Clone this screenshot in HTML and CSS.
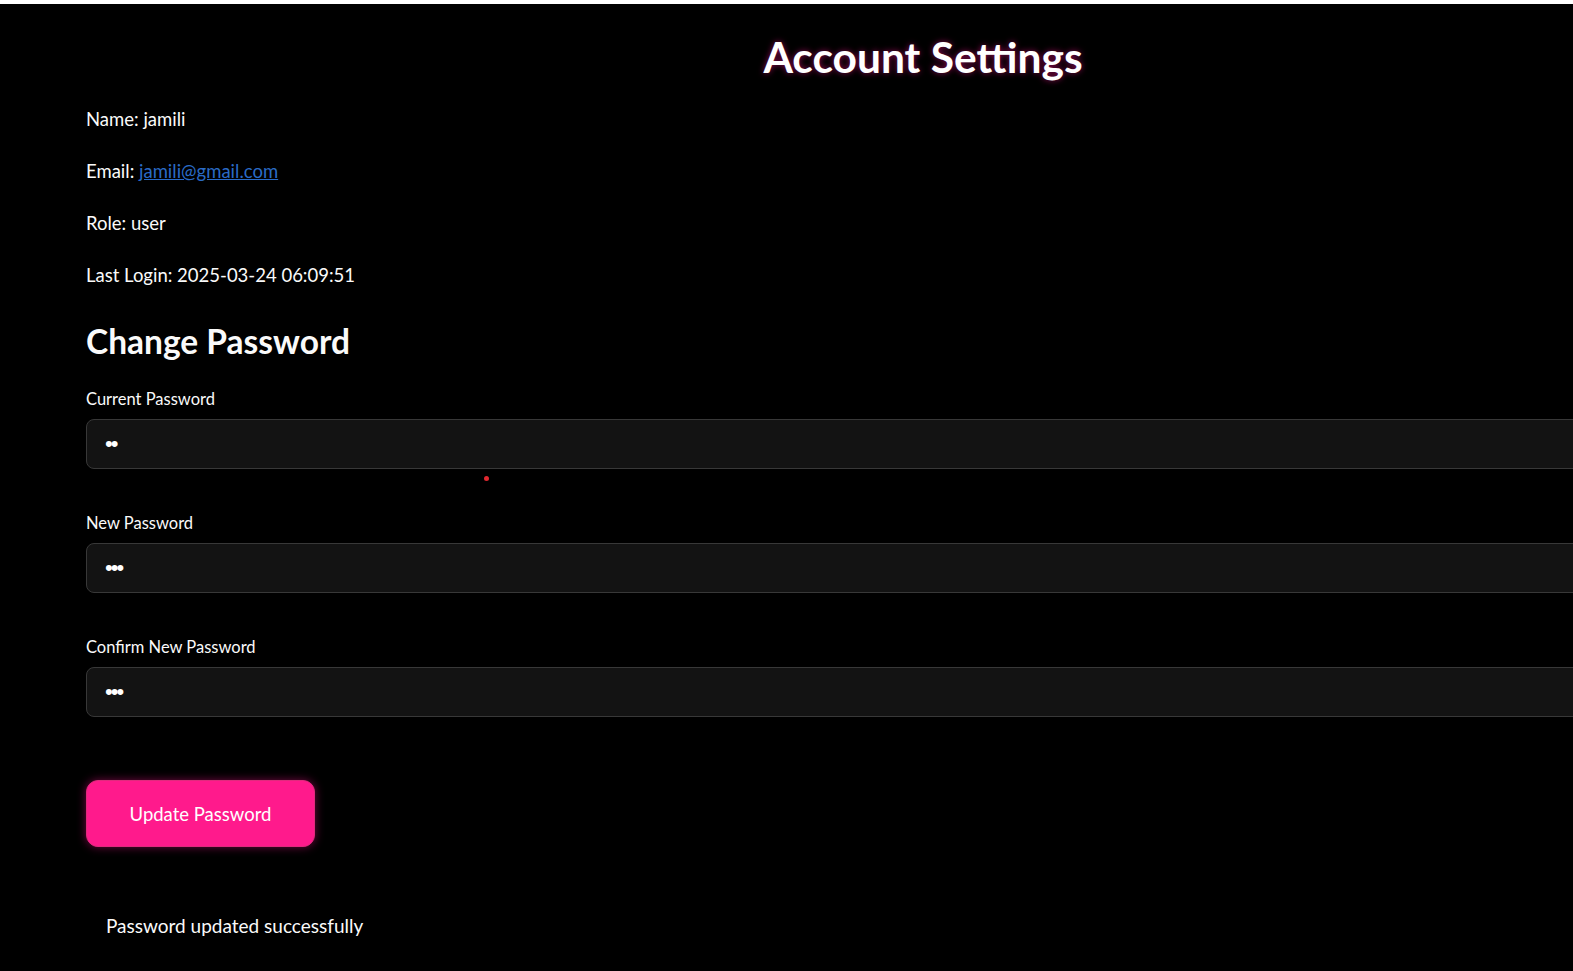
FILE: index.html
```html
<!DOCTYPE html>
<html>
<head>
<meta charset="utf-8">
<link rel="stylesheet" href="styles.css">
</head>
<body>
<div class="topbar"></div>
<main class="page">
  <h1 class="title">Account Settings</h1>
  <p class="info">Name: jamili</p>
  <p class="info">Email: <a href="#" class="link">jamili@gmail.com</a></p>
  <p class="info">Role: user</p>
  <p class="info">Last Login: 2025-03-24 06:09:51</p>
  <h2 class="subtitle">Change Password</h2>
  <div class="field">
    <label class="label">Current Password</label>
    <input class="input" type="password" value="12">
    <span class="dot"></span>
  </div>
  <div class="field">
    <label class="label">New Password</label>
    <input class="input" type="password" value="123">
  </div>
  <div class="field">
    <label class="label">Confirm New Password</label>
    <input class="input" type="password" value="123">
  </div>
  <button class="btn">Update Password</button>
  <div class="alert">Password updated successfully</div>
</main>
</body>
</html>
```
FILE: styles.css
```css
html, body {
  margin: 0;
  padding: 0;
  background: #000;
  overflow: hidden;
}
body {
  font-family: "Lato", "Noto Sans", sans-serif;
  color: #fafafa;
  width: 1573px;
  height: 971px;
}
.topbar {
  height: 4px;
  background: #fff;
}
.page {
  width: 1674px;
  padding-left: 86px;
  box-sizing: content-box;
}
.title {
  margin: 0;
  padding-top: 30px;
  height: 67px;
  text-align: center;
  font-size: 42.5px;
  font-weight: 700;
  line-height: 46px;
  color: #fff;
  text-shadow: 0 0 6px rgba(255, 20, 147, 0.55);
}
.info {
  margin: 0;
  font-size: 18.5px;
  line-height: 26px;
  height: 52px;
  box-sizing: border-box;
  padding-top: 5px;
}
.link {
  color: #2a6bc6;
  text-decoration: underline;
}
.subtitle {
  margin: 0;
  padding-top: 10px;
  font-size: 33.5px;
  font-weight: 700;
  line-height: 44px;
  height: 70px;
}
.field {
  position: relative;
  display: flex;
  flex-direction: column;
  height: 124px;
}
.label {
  font-size: 16.5px;
  line-height: 20px;
  height: 30px;
}
.input {
  height: 50px;
  box-sizing: border-box;
  background: #131313;
  border: 1px solid #383838;
  border-radius: 8px;
  padding: 0 18px;
  color: #fff;
  font-size: 22px;
  letter-spacing: -2px;
  width: 100%;
  outline: none;
}
.dot {
  position: absolute;
  left: 398px;
  top: 87px;
  width: 5px;
  height: 5px;
  border-radius: 50%;
  background: #e0282f;
}
.btn {
  margin-top: 19px;
  width: 229px;
  height: 67px;
  border: 1px solid #e02a7d;
  border-radius: 12px;
  background: #ff1a8c;
  color: #fff;
  font-family: "Lato", "Noto Sans", sans-serif;
  font-size: 18.5px;
  box-shadow: 0 0 10px rgba(255, 20, 147, 0.45);
  display: block;
}
.alert {
  margin-top: 66px;
  padding-left: 20px;
  font-size: 19px;
  line-height: 26px;
}
```
